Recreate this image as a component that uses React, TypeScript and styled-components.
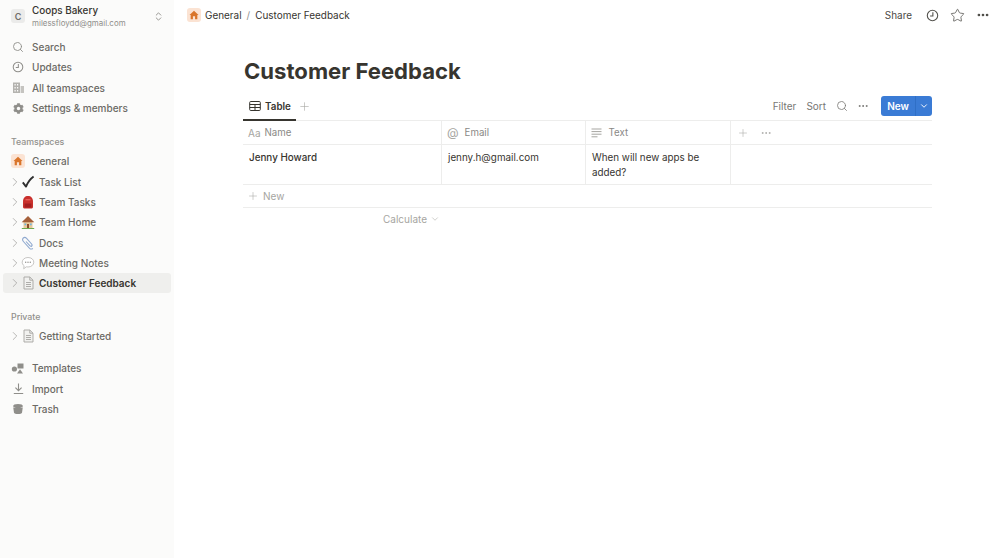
import React from 'react';
import styled, { createGlobalStyle } from 'styled-components';
import { ChevronDown, ChevronRight, ChevronsUpDown, MoreHorizontal, Plus, Search, Star } from 'lucide-react';
import { FaCog } from 'react-icons/fa';

const GlobalStyle = createGlobalStyle`
  html, body {
    margin: 0;
    padding: 0;
    height: 100%;
    background: #fff;
    font-family: Inter, "Liberation Sans", sans-serif;
    color: #37352f;
  }
  * { box-sizing: border-box; }
`;

const Page = styled.div`
  display: flex;
  width: 1000px;
  height: 558px;
  overflow: hidden;
`;

const Sidebar = styled.aside`
  width: 174px;
  flex: none;
  background: #fbfbfa;
  padding-top: 3px;
`;

const Workspace = styled.div`
  display: flex;
  align-items: center;
  height: 26px;
  padding: 0 10px 0 11px;
  margin-bottom: 8px;
`;

const WorkspaceBadge = styled.div`
  width: 14px;
  height: 14px;
  border-radius: 3px;
  background: #ebebea;
  color: #6f6e69;
  font-size: 9px;
  font-weight: 600;
  display: flex;
  align-items: center;
  justify-content: center;
  margin-right: 7px;
`;

const WorkspaceText = styled.div`
  flex: 1;
  display: flex;
  flex-direction: column;
  gap: 1px;
`;

const WorkspaceName = styled.div`
  font-size: 9.9px;
  font-weight: 500;
  line-height: 13px;
  color: #37352f;
`;

const WorkspaceMail = styled.div`
  font-size: 7.95px;
  line-height: 10px;
  color: #8f8e8a;
`;

const NavGroup = styled.nav<{ $gapAfter?: number }>`
  display: flex;
  flex-direction: column;
  margin-bottom: ${({ $gapAfter }) => $gapAfter ?? 0}px;
`;

const NavRow = styled.div<{ $active?: boolean; $tall?: boolean }>`
  display: flex;
  align-items: center;
  height: ${({ $tall }) => ($tall ? 21 : 20.3)}px;
  margin: 0 3px;
  border-radius: 3px;
  padding-left: 8px;
  font-size: 10px;
  font-weight: ${({ $active }) => ($active ? 600 : 500)};
  color: ${({ $active }) => ($active ? '#37352f' : '#6b6a65')};
  background: ${({ $active }) => ($active ? '#efefed' : 'transparent')};
`;

const NavIcon = styled.span`
  width: 14px;
  height: 14px;
  margin-right: 7px;
  display: flex;
  align-items: center;
  justify-content: center;
  color: #8f8e8a;
  flex: none;
`;

const Caret = styled.span`
  width: 7px;
  display: flex;
  align-items: center;
  justify-content: center;
  margin-right: 3px;
  color: #9b9a97;
  flex: none;

  svg {
    flex: none;
  }
`;

const PageIcon = styled.span`
  width: 14px;
  height: 14px;
  margin-right: 4px;
  display: flex;
  align-items: center;
  justify-content: center;
  flex: none;
`;

const SectionLabel = styled.div<{ $top: number; $bottom: number }>`
  font-size: 8.8px;
  font-weight: 500;
  line-height: 12px;
  color: #91908c;
  padding-left: 11px;
  margin: ${({ $top }) => $top}px 0 ${({ $bottom }) => $bottom}px;
`;

const HouseBadge = styled.span`
  width: 14px;
  height: 14px;
  border-radius: 3px;
  background: #fbe3d3;
  display: flex;
  align-items: center;
  justify-content: center;
  flex: none;
`;

const Main = styled.main`
  flex: 1;
  display: flex;
  flex-direction: column;
  min-width: 0;
`;

const TopBar = styled.header`
  height: 30px;
  display: flex;
  align-items: center;
  padding: 0 10px 0 13px;
  font-size: 9.95px;
  color: #37352f;
`;

const Crumbs = styled.div`
  flex: 1;
  display: flex;
  align-items: center;
  gap: 4px;
`;

const CrumbSep = styled.span`
  margin: 0 1px;
  color: #91908c;
`;

const TopActions = styled.div`
  display: flex;
  align-items: center;
  gap: 10px;
  color: #4b4a45;
`;

const ShareLabel = styled.span`
  margin-right: 4px;
`;

const FavStar = styled(Star)`
  margin-left: 1px;
  margin-right: 1px;
`;

const Content = styled.div`
  padding: 25px 68px 0 69px;
`;

const Title = styled.h1`
  margin: 0 0 6px 1px;
  font-size: 22.1px;
  line-height: 32px;
  font-weight: 700;
  color: #37352f;
`;

const ViewBar = styled.div`
  display: flex;
  align-items: stretch;
  justify-content: space-between;
  height: 28px;
  border-bottom: 1px solid #ededec;
`;

const TabGroup = styled.div`
  display: flex;
  align-items: center;
`;

const ActiveTab = styled.div`
  display: flex;
  align-items: center;
  align-self: stretch;
  gap: 4px;
  width: 53px;
  padding-left: 6px;
  margin-bottom: -1px;
  font-size: 9.8px;
  font-weight: 600;
  color: #37352f;
  border-bottom: 2px solid #37352f;
`;

const AddTab = styled.span`
  display: flex;
  margin-left: 2px;
  color: #a6a5a1;
`;

const ViewTools = styled.div`
  display: flex;
  align-items: center;
  padding-bottom: 1px;
  font-size: 10px;
  color: #787774;
`;

const ToolLabel = styled.span`
  margin-right: 10px;
`;

const ToolIcon = styled.span`
  display: flex;
  color: #787774;
  margin-right: 9px;
`;

const NewSplit = styled.div`
  display: flex;
  height: 20px;
  width: 51px;
  margin-left: 3px;
  border-radius: 3px;
  overflow: hidden;
  background: #3a7bd5;
  color: #fff;
  font-size: 10px;
  font-weight: 600;
`;

const NewLabel = styled.div`
  flex: 1;
  display: flex;
  align-items: center;
  justify-content: center;
`;

const NewCaret = styled.div`
  width: 17px;
  display: flex;
  align-items: center;
  justify-content: center;
  border-left: 1px solid #2f6fc6;
`;

const TableGrid = styled.div`
  display: grid;
  grid-template-columns: 199px 144px 145px 1fr;
`;

const HeadCell = styled.div<{ $last?: boolean }>`
  height: 24px;
  display: flex;
  align-items: center;
  gap: 4px;
  padding-left: 5px;
  font-size: 9.7px;
  color: #8a8985;
  border-bottom: 1px solid #ededec;
  border-right: ${({ $last }) => ($last ? 'none' : '1px solid #ededec')};
`;

const HeadGlyph = styled.span<{ $size?: number; $after?: number }>`
  display: flex;
  align-items: center;
  color: #a6a5a1;
  font-size: ${({ $size }) => $size ?? 10}px;
  margin-right: ${({ $after }) => $after ?? 0}px;
`;

const HeadTools = styled.div`
  display: flex;
  align-items: center;
  gap: 11px;
  color: #a6a5a1;
  padding-left: 1px;
`;

const BodyCell = styled.div<{ $last?: boolean; $bold?: boolean }>`
  height: 40px;
  padding: 5px 6px 0;
  font-size: 9.85px;
  line-height: 15px;
  font-weight: ${({ $bold }) => ($bold ? 500 : 400)};
  color: #37352f;
  border-bottom: 1px solid #ededec;
  border-right: ${({ $last }) => ($last ? 'none' : '1px solid #ededec')};
`;

const AddRow = styled.div`
  height: 23px;
  display: flex;
  align-items: center;
  gap: 4px;
  padding-left: 4px;
  font-size: 10px;
  color: #a6a5a1;
  border-bottom: 1px solid #ededec;
`;

const CalculateRow = styled.div`
  display: flex;
  align-items: center;
  gap: 3px;
  height: 22px;
  padding-left: 140px;
  font-size: 10px;
  color: #a6a5a1;
`;

const HouseGlyph = ({ size }: { size: number }) => (
  <svg width={size} height={size} viewBox="0 0 12 12">
    <path d="M6 1 11.4 6 10 6v5H7.3V7.6H4.7V11H2V6H.6z" fill="#d9752b" />
  </svg>
);

const ClockIcon = ({ size, color }: { size: number; color: string }) => (
  <svg width={size} height={size} viewBox="0 0 14 14" fill="none" stroke={color} strokeWidth="1.2">
    <circle cx="7" cy="7" r="5.6" />
    <path d="M7.4 3.6V7.5H4.4" />
  </svg>
);

const BuildingIcon = () => (
  <svg width="13" height="13" viewBox="0 0 13 13">
    <path d="M1 1.5h7v10.5H1z" fill="#b4b3af" />
    <path d="M8.6 5H12v7H8.6z" fill="#c5c4c0" />
    <path d="M2.5 3h1.2v1.5H2.5zM5 3h1.2v1.5H5zM2.5 6h1.2v1.5H2.5zM5 6h1.2v1.5H5zM2.5 9h1.2v1.5H2.5zM5 9h1.2v1.5H5z" fill="#fbfbfa" />
  </svg>
);

const ImportIcon = () => (
  <svg width="13" height="13" viewBox="0 0 13 13" fill="none" stroke="#8f8e8a" strokeWidth="1.1">
    <path d="M6.5 1.5v7M3.4 5.6l3.1 3.1 3.1-3.1M1.8 11.5h9.4" />
  </svg>
);

const TemplatesIcon = () => (
  <svg width="14" height="14" viewBox="0 0 14 14" fill="#8f8e8a">
    <circle cx="3.4" cy="8" r="2.6" />
    <path d="M6.5 2.5h6v5h-6z" />
    <path d="M9 8.2l3 4.3H6z" />
  </svg>
);

const TrashIcon = () => (
  <svg width="12" height="12" viewBox="0 0 12 12" fill="#8f8e8a">
    <ellipse cx="6" cy="3" rx="4.8" ry="2" />
    <path d="M1.2 4.2C2.5 5.4 9.5 5.4 10.8 4.2L10 9.8C9.8 11.4 2.2 11.4 2 9.8z" />
  </svg>
);

const CheckEmoji = () => (
  <svg width="14" height="14" viewBox="0 0 14 14" fill="none">
    <path d="M1.8 7.4 5 11.6C6.6 7.5 9 4 12.6 1.4" stroke="#2f2f2f" strokeWidth="1.9" strokeLinejoin="round" />
  </svg>
);

const BackpackEmoji = () => (
  <svg width="14" height="14" viewBox="0 0 14 14">
    <path d="M2 6.5C2 3 4 1 7 1s5 2 5 5.5V12c0 1-1 1.6-2 1.6H4c-1 0-2-.6-2-1.6z" fill="#c9302c" />
    <path d="M3.6 8.5h6.8v4H3.6z" fill="#a31f20" />
    <path d="M4.5 4h5v1.4h-5z" fill="#e6605a" />
  </svg>
);

const HomeEmoji = () => (
  <svg width="14" height="14" viewBox="0 0 14 14">
    <path d="M2.5 7h9v6h-9z" fill="#e9c99a" />
    <path d="M7 1 13.3 7.3H.7z" fill="#a5603a" />
    <path d="M6 9h2v4H6z" fill="#8a4d2a" />
    <path d="M3.5 8.5h1.7v1.7H3.5zM9 8.5h1.7v1.7H9z" fill="#6fb6e0" />
    <path d="M.8 13h12.4v1H.8z" fill="#6ea84f" />
  </svg>
);

const ClipEmoji = () => (
  <svg width="14" height="14" viewBox="0 0 14 14" fill="none">
    <path d="M11.8 12.3c-1 1-2.3.9-3.2 0L2.4 5.5C1.2 4.2 1.4 2.8 2.3 2c1-.9 2.3-.7 3.3.4l5 5.6c.7.8.6 1.5.1 2s-1.2.4-1.9-.3L5 5.5" stroke="#8fa9cf" strokeWidth="1.1" />
  </svg>
);

const BubbleEmoji = () => (
  <svg width="14" height="14" viewBox="0 0 14 14">
    <path d="M7 1.5c3.3 0 5.8 2 5.8 4.7S10.3 11 7 11c-.6 0-1.2-.1-1.7-.2L2.7 12.8l.4-3C1.9 8.9 1.2 7.6 1.2 6.2 1.2 3.5 3.7 1.5 7 1.5z" fill="#fff" stroke="#b9b8b5" strokeWidth=".8" />
    <circle cx="4.7" cy="6.2" r=".7" fill="#8f8e8a" />
    <circle cx="7" cy="6.2" r=".7" fill="#8f8e8a" />
    <circle cx="9.3" cy="6.2" r=".7" fill="#8f8e8a" />
  </svg>
);

const DocIcon = () => (
  <svg width="13" height="14" viewBox="0 0 13 14" fill="none" stroke="#a6a5a1" strokeWidth=".9">
    <path d="M2 1h5.8L11 4.2V13H2z" fill="#f1f1ef" />
    <path d="M7.8 1v3.2H11M4 6.5h5M4 8.5h5M4 10.5h5" />
  </svg>
);

const TableIcon = () => (
  <svg width="12" height="12" viewBox="0 0 12 12" fill="none" stroke="#37352f" strokeWidth="1">
    <rect x=".7" y="1.5" width="10.6" height="9" rx="1" />
    <path d="M.7 4.5h10.6M.7 7.5h10.6M6 4.5v6" />
  </svg>
);

const LinesIcon = () => (
  <svg width="11" height="10" viewBox="0 0 11 10" stroke="#a6a5a1" strokeWidth="1">
    <path d="M.5 1h10M.5 3.6h10M.5 6.2h10M.5 8.8h6" />
  </svg>
);

type TreeItem = { label: string; icon: React.ReactNode; active?: boolean };

const teamPages: TreeItem[] = [
  { label: 'Task List', icon: <CheckEmoji /> },
  { label: 'Team Tasks', icon: <BackpackEmoji /> },
  { label: 'Team Home', icon: <HomeEmoji /> },
  { label: 'Docs', icon: <ClipEmoji /> },
  { label: 'Meeting Notes', icon: <BubbleEmoji /> },
  { label: 'Customer Feedback', icon: <DocIcon />, active: true },
];

const TreeRow = ({ label, icon, active }: TreeItem) => (
  <NavRow $active={active}>
    <Caret>
      <ChevronRight size={14} strokeWidth={1.2} />
    </Caret>
    <PageIcon>{icon}</PageIcon>
    {label}
  </NavRow>
);

const App: React.FC = () => {
  return (
    <>
      <GlobalStyle />
      <Page>
        <Sidebar>
          <Workspace>
            <WorkspaceBadge>C</WorkspaceBadge>
            <WorkspaceText>
              <WorkspaceName>Coops Bakery</WorkspaceName>
              <WorkspaceMail>milessfloydd@gmail.com</WorkspaceMail>
            </WorkspaceText>
            <ChevronsUpDown size={11} color="#8f8e8a" />
          </Workspace>
          <NavGroup>
            <NavRow>
              <NavIcon><Search size={12} strokeWidth={1.8} /></NavIcon>
              Search
            </NavRow>
            <NavRow>
              <NavIcon><ClockIcon size={12} color="#8f8e8a" /></NavIcon>
              Updates
            </NavRow>
            <NavRow>
              <NavIcon><BuildingIcon /></NavIcon>
              All teamspaces
            </NavRow>
            <NavRow>
              <NavIcon><FaCog size={11} /></NavIcon>
              {'Settings & members'}
            </NavRow>
          </NavGroup>
          <SectionLabel $top={18} $bottom={2.5}>Teamspaces</SectionLabel>
          <NavGroup>
            <NavRow $tall>
              <NavIcon><HouseBadge><HouseGlyph size={10} /></HouseBadge></NavIcon>
              General
            </NavRow>
            {teamPages.map((item) => (
              <TreeRow key={item.label} {...item} />
            ))}
          </NavGroup>
          <SectionLabel $top={17.5} $bottom={3}>Private</SectionLabel>
          <NavGroup $gapAfter={12}>
            <TreeRow label="Getting Started" icon={<DocIcon />} />
          </NavGroup>
          <NavGroup>
            <NavRow>
              <NavIcon><TemplatesIcon /></NavIcon>
              Templates
            </NavRow>
            <NavRow>
              <NavIcon><ImportIcon /></NavIcon>
              Import
            </NavRow>
            <NavRow>
              <NavIcon><TrashIcon /></NavIcon>
              Trash
            </NavRow>
          </NavGroup>
        </Sidebar>
        <Main>
          <TopBar>
            <Crumbs>
              <HouseBadge><HouseGlyph size={10} /></HouseBadge>
              General
              <CrumbSep>/</CrumbSep>
              Customer Feedback
            </Crumbs>
            <TopActions>
              <ShareLabel>Share</ShareLabel>
              <ClockIcon size={13} color="#55544f" />
              <FavStar size={15} strokeWidth={1.2} />
              <MoreHorizontal size={14} strokeWidth={2.6} />
            </TopActions>
          </TopBar>
          <Content>
            <Title>Customer Feedback</Title>
            <ViewBar>
              <TabGroup>
                <ActiveTab>
                  <TableIcon />
                  Table
                </ActiveTab>
                <AddTab><Plus size={13} strokeWidth={1.1} /></AddTab>
              </TabGroup>
              <ViewTools>
                <ToolLabel>Filter</ToolLabel>
                <ToolLabel>Sort</ToolLabel>
                <ToolIcon><Search size={12} strokeWidth={1.6} /></ToolIcon>
                <ToolIcon><MoreHorizontal size={12} strokeWidth={2} /></ToolIcon>
                <NewSplit>
                  <NewLabel>New</NewLabel>
                  <NewCaret><ChevronDown size={10} strokeWidth={2.2} /></NewCaret>
                </NewSplit>
              </ViewTools>
            </ViewBar>
            <TableGrid>
              <HeadCell><HeadGlyph>Aa</HeadGlyph>Name</HeadCell>
              <HeadCell><HeadGlyph $size={12} $after={2}>@</HeadGlyph>Email</HeadCell>
              <HeadCell><HeadGlyph $after={2.5}><LinesIcon /></HeadGlyph>Text</HeadCell>
              <HeadCell $last>
                <HeadTools>
                  <Plus size={12} strokeWidth={1.1} />
                  <MoreHorizontal size={12} strokeWidth={1.6} />
                </HeadTools>
              </HeadCell>
              <BodyCell $bold>Jenny Howard</BodyCell>
              <BodyCell>jenny.h@gmail.com</BodyCell>
              <BodyCell>When will new apps be added?</BodyCell>
              <BodyCell $last />
            </TableGrid>
            <AddRow><Plus size={12} strokeWidth={1.1} />New</AddRow>
            <CalculateRow>Calculate<ChevronDown size={10} strokeWidth={1.3} /></CalculateRow>
          </Content>
        </Main>
      </Page>
    </>
  );
};

export default App;
